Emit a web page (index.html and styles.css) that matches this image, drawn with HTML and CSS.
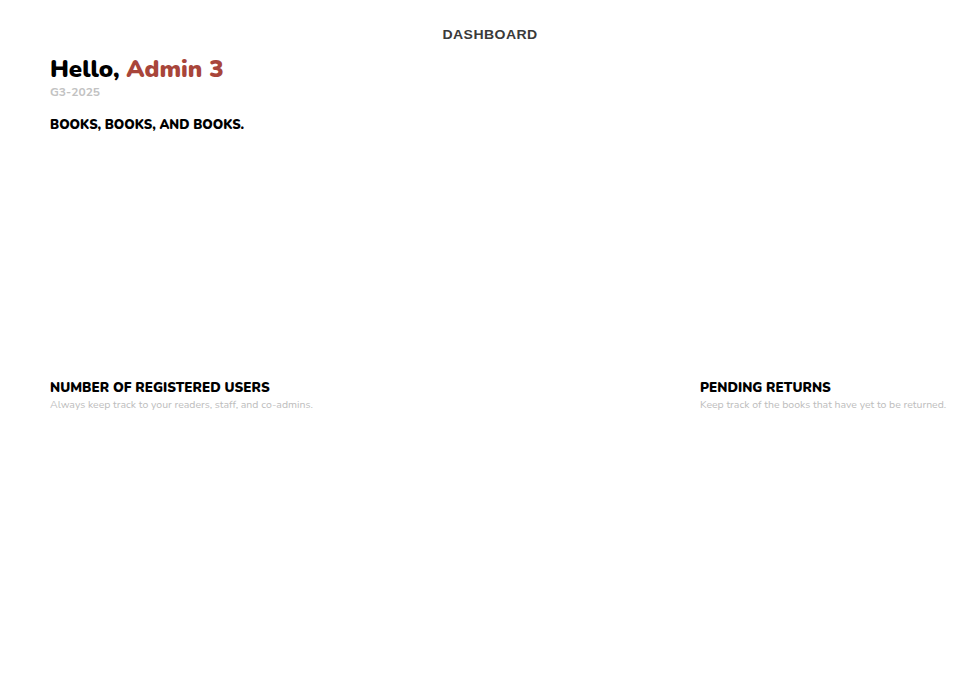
FILE: index.html
```html
<!DOCTYPE html>
<html>
<head>
<meta charset="utf-8">
<link rel="stylesheet" href="styles.css">
</head>
<body>
<header class="topbar"><h1 class="page-title">DASHBOARD</h1></header>
<main class="content">
  <section class="greeting">
    <h2 class="hello">Hello, <span class="name">Admin 3</span></h2>
    <p class="code">G3-2025</p>
  </section>
  <section class="books">
    <h3 class="section-title books-title">BOOKS, BOOKS, AND BOOKS.</h3>
  </section>
  <section class="stats">
    <div class="stat">
      <h3 class="section-title">NUMBER OF REGISTERED USERS</h3>
      <p class="subtitle">Always keep track to your readers, staff, and co-admins.</p>
    </div>
    <div class="stat">
      <h3 class="section-title">PENDING RETURNS</h3>
      <p class="subtitle">Keep track of the books that have yet to be returned.</p>
    </div>
  </section>
</main>
</body>
</html>
```
FILE: styles.css
```css
html, body { margin: 0; padding: 0; background: #fff; }
body { font-family: "Nunito", "Lato", "Noto Sans", sans-serif; color: #000; width: 980px; height: 674px; overflow: hidden; }
.topbar { display: flex; justify-content: center; padding-top: 27px; }
.page-title { margin: 0; font-family: "Liberation Sans", Arial, sans-serif; font-weight: 700; font-size: 13px; letter-spacing: 0.4px; color: #3a3a3a; line-height: 15px; transform: scaleX(1.08); }
.content { padding: 0 30px 0 50px; }
.greeting { margin-top: 12px; }
.hello { margin: 0; font-size: 24px; font-weight: 900; line-height: 30px; }
.name { color: #a8453a; }
.code { margin: 0; font-size: 12px; font-weight: 700; color: #c2c2c2; line-height: 16px; }
.books { margin-top: 17px; height: 263px; }
.section-title { margin: 0; font-size: 13.4px; font-weight: 900; line-height: 16px; }
.books-title { font-size: 13px; }
.stats { display: grid; grid-template-columns: 1fr 250px; }
.stat .section-title { margin-bottom: 2px; }
.subtitle { margin: 0; font-size: 10.5px; color: #bdbdbd; line-height: 13px; white-space: nowrap; }
```
